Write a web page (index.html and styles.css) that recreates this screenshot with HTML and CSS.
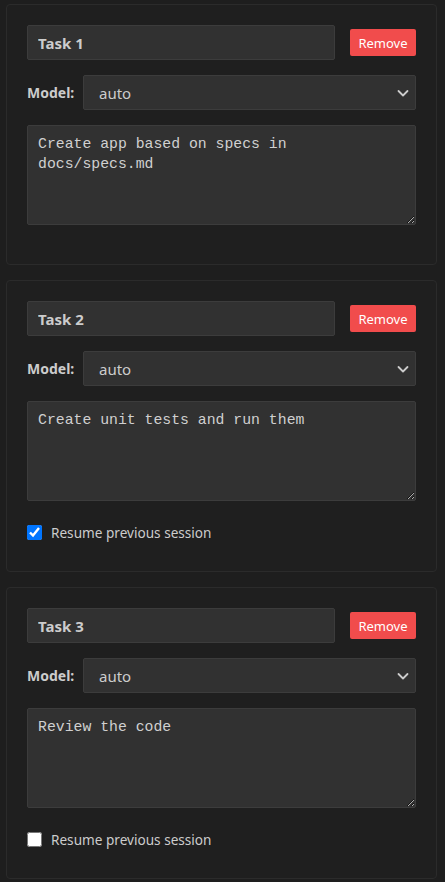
FILE: index.html
```html
<!DOCTYPE html>
<html lang="en">
<head>
<meta charset="utf-8">
<title>Tasks</title>
<link rel="stylesheet" href="styles.css">
</head>
<body>
<div class="tasks">
  <section class="card">
    <div class="title-row">
      <input class="title-input" type="text" value="Task 1">
      <button class="remove-btn" type="button">Remove</button>
    </div>
    <div class="model-row">
      <label class="model-label">Model:</label>
      <div class="select-wrap">
        <select class="model-select"><option>auto</option></select>
        <svg class="chevron" viewBox="0 0 16 16" width="16" height="16"><path d="M3.5 6l4.5 4.5 4.5-4.5" fill="none" stroke="#cccccc" stroke-width="1.8" stroke-linecap="round" stroke-linejoin="round"/></svg>
      </div>
    </div>
    <textarea class="prompt">Create app based on specs in docs/specs.md</textarea>
  </section>

  <section class="card">
    <div class="title-row">
      <input class="title-input" type="text" value="Task 2">
      <button class="remove-btn" type="button">Remove</button>
    </div>
    <div class="model-row">
      <label class="model-label">Model:</label>
      <div class="select-wrap">
        <select class="model-select"><option>auto</option></select>
        <svg class="chevron" viewBox="0 0 16 16" width="16" height="16"><path d="M3.5 6l4.5 4.5 4.5-4.5" fill="none" stroke="#cccccc" stroke-width="1.8" stroke-linecap="round" stroke-linejoin="round"/></svg>
      </div>
    </div>
    <textarea class="prompt">Create unit tests and run them</textarea>
    <label class="resume-row"><input class="resume-check" type="checkbox" checked> <span>Resume previous session</span></label>
  </section>

  <section class="card">
    <div class="title-row">
      <input class="title-input" type="text" value="Task 3">
      <button class="remove-btn" type="button">Remove</button>
    </div>
    <div class="model-row">
      <label class="model-label">Model:</label>
      <div class="select-wrap">
        <select class="model-select"><option>auto</option></select>
        <svg class="chevron" viewBox="0 0 16 16" width="16" height="16"><path d="M3.5 6l4.5 4.5 4.5-4.5" fill="none" stroke="#cccccc" stroke-width="1.8" stroke-linecap="round" stroke-linejoin="round"/></svg>
      </div>
    </div>
    <textarea class="prompt">Review the code</textarea>
    <label class="resume-row"><input class="resume-check" type="checkbox"> <span>Resume previous session</span></label>
  </section>
</div>
</body>
</html>
```
FILE: styles.css
```css
* { box-sizing: border-box; }

html, body {
  margin: 0;
  background: #1e1e1e;
}

body {
  font-family: "Noto Sans", "Open Sans", sans-serif;
  color: #cccccc;
}

.tasks {
  display: flex;
  flex-direction: column;
  gap: 15px;
  padding: 4px 8px 0 6px;
}

.card {
  background: #1f1f1f;
  border: 1px solid #2b2b2b;
  border-radius: 4px;
  padding: 20px 20px 19px;
  display: flex;
  flex-direction: column;
}

.title-row {
  display: flex;
  align-items: center;
  gap: 15px;
  margin-bottom: 15px;
}

.title-input {
  flex: 1;
  min-width: 0;
  height: 35px;
  background: #313131;
  border: 1px solid #3c3c3c;
  border-radius: 2px;
  color: #cccccc;
  font-family: "Noto Sans", "Open Sans", sans-serif;
  font-weight: 700;
  font-size: 15px;
  padding: 0 10px;
  outline: none;
}

.remove-btn {
  width: 66px;
  height: 27px;
  background: #f14c4c;
  color: #ffffff;
  border: none;
  border-radius: 2px;
  font-family: "Noto Sans", "Open Sans", sans-serif;
  font-size: 13px;
  padding: 0;
}

.model-row {
  display: flex;
  align-items: center;
  gap: 10px;
  margin-bottom: 15px;
}

.model-label {
  font-weight: 700;
  font-size: 14px;
  width: 46px;
  white-space: nowrap;
}

.select-wrap {
  position: relative;
  flex: 1;
}

.model-select {
  display: block;
  width: 100%;
  height: 35px;
  appearance: none;
  -webkit-appearance: none;
  background: #313131;
  border: 1px solid #3c3c3c;
  border-radius: 2px;
  color: #cccccc;
  font-family: "Noto Sans", "Open Sans", sans-serif;
  font-size: 15px;
  padding: 0 0 0 15px;
  outline: none;
}

.chevron {
  position: absolute;
  right: 5px;
  top: 10px;
  pointer-events: none;
}

.prompt {
  display: block;
  width: 100%;
  height: 100px;
  background: #313131;
  border: 1px solid #3c3c3c;
  border-radius: 2px;
  color: #d0d0d0;
  font-family: "Liberation Mono", monospace;
  font-size: 14.8px;
  line-height: 20px;
  padding: 8px 10px;
  margin: 0 0 20px;
  outline: none;
}

.resume-row {
  display: flex;
  align-items: center;
  gap: 9px;
  height: 22px;
  margin-bottom: 9px;
  font-size: 13.6px;
}

.resume-check {
  width: 15px;
  height: 15px;
  margin: 0;
}
```
